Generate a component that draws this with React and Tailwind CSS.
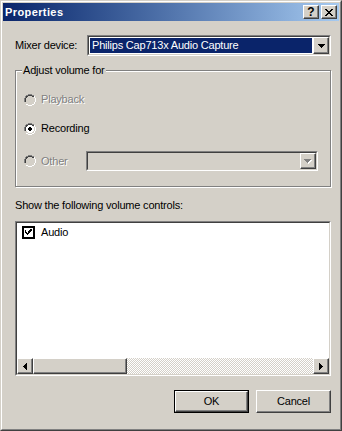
import React from "react";

const raised =
  "border border-t-[#ffffff] border-l-[#ffffff] border-r-[#404040] border-b-[#404040] shadow-[inset_-1px_-1px_0_#808080]";

function Arrow({ dir = "down", color = "#000" }) {
  if (dir === "down")
    return (
      <svg width="7" height="4" viewBox="0 0 7 4">
        <path d="M0 0h7v1H0zM1 1h5v1H1zM2 2h3v1H2zM3 3h1v1H3z" fill={color} />
      </svg>
    );
  if (dir === "left")
    return (
      <svg width="4" height="7" viewBox="0 0 4 7">
        <path d="M3 0h1v7H3zM2 1h1v5H2zM1 2h1v3H1zM0 3h1v1H0z" fill={color} />
      </svg>
    );
  return (
    <svg width="4" height="7" viewBox="0 0 4 7">
      <path d="M0 0h1v7H0zM1 1h1v5H1zM2 2h1v3H2zM3 3h1v1H3z" fill={color} />
    </svg>
  );
}

function Radio({ checked, disabled }) {
  return (
    <svg width="12" height="12" viewBox="0 0 12 12" className="shrink-0">
      <path d="M4 0h4v1H4zM2 1h2v1H2zM8 1h2v1H8zM1 2h1v2H1zM0 4h1v4H0z" fill="#808080" />
      <path d="M4 1h4v1H4zM2 2h2v1H2zM8 2h2v1H8zM2 3h1v1H2zM1 4h1v4H1z" fill="#404040" />
      <path d="M10 2h1v2h-1zM11 4h1v4h-1zM10 8h1v2h-1zM8 10h2v1H8zM4 11h4v1H4zM2 10h2v1H2z" fill="#ffffff" />
      <path d="M9 3h1v1H9zM10 4h1v4h-1zM9 8h1v1H9zM8 9h1v1H8zM4 10h4v1H4zM3 9h1v1H3zM2 8h1v1H2z" fill="#d4d0c8" />
      <path
        d="M4 2h4v1H4zM3 3h6v1H3zM2 4h8v4H2zM3 8h6v1H3zM4 9h4v1H4z"
        fill={disabled ? "#d4d0c8" : "#ffffff"}
      />
      {checked && <path d="M5 4h2v1H5zM4 5h4v2H4zM5 7h2v1H5z" fill="#000" />}
    </svg>
  );
}

function Check() {
  return (
    <svg width="13" height="13" viewBox="0 0 13 13" className="shrink-0">
      <rect x="0" y="0" width="13" height="13" fill="#000" />
      <rect x="2" y="2" width="9" height="9" fill="#fff" />
      <path d="M9 3h1v1H9zM8 4h2v1H8zM3 5h1v1H3zM7 5h2v1H7zM3 6h2v1H3zM6 6h2v1H6zM4 7h3v1H4zM5 8h1v1H5z" fill="#000" />
      <path d="M3 4h1v1H3zM4 6h1v1H4zM5 7h1v1H5zM6 5h1v1H6zM7 4h1v1H7zM8 3h1v1H8z" fill="#000" />
    </svg>
  );
}

function DisabledText({ children }) {
  return (
    <span className="text-[#808080] [text-shadow:1px_1px_0_#ffffff]">{children}</span>
  );
}

export default function App() {
  return (
    <div
      className="w-[342px] h-[431px] bg-[#d4d0c8] border border-t-[#d4d0c8] border-l-[#d4d0c8] border-r-[#404040] border-b-[#404040] text-[11px] text-black leading-[13px] tracking-[-0.2px]"
      style={{ fontFamily: '"Liberation Sans", Arial, sans-serif' }}
    >
      <div className="w-full h-full border border-t-white border-l-white border-r-[#808080] border-b-[#808080] p-px flex flex-col">
        {/* Title bar */}
        <div className="h-[18px] flex items-center justify-between bg-gradient-to-r from-[#0a246a] to-[#a6caf0] pl-[2px] pr-[2px]">
          <span className="text-white font-bold text-[11px] tracking-[0.4px]">Properties</span>
          <div className="flex gap-[2px]">
            <div className={`w-[16px] h-[14px] bg-[#d4d0c8] flex items-center justify-center ${raised}`}>
              <span className="font-bold text-[12px] leading-[11px] text-black tracking-normal">?</span>
            </div>
            <div className={`w-[16px] h-[14px] bg-[#d4d0c8] flex items-center justify-center ${raised}`}>
              <svg width="8" height="7" viewBox="0 0 8 7">
                <path d="M0 0h2v1H0zM6 0h2v1H6zM1 1h2v1H1zM5 1h2v1H5zM2 2h4v1H2zM3 3h2v1H3zM2 4h4v1H2zM1 5h2v1H1zM5 5h2v1H5zM0 6h2v1H0zM6 6h2v1H6z" fill="#000" />
              </svg>
            </div>
          </div>
        </div>

        {/* Content */}
        <div className="flex flex-col pl-[12px] pt-[14px]">
          {/* Mixer device */}
          <div className="flex items-center w-[316px] h-[21px]">
            <span className="w-[72px]">Mixer device:</span>
            <div className="flex-1 h-[21px] border border-t-[#808080] border-l-[#808080] border-r-white border-b-white">
              <div className="h-full border border-t-[#404040] border-l-[#404040] border-r-[#d4d0c8] border-b-[#d4d0c8] bg-white flex items-center p-px">
                <div className="flex-1 h-full bg-[#0a246a] text-white flex items-center pl-[2px]">
                  Philips Cap713x Audio Capture
                </div>
                <div className={`w-[16px] h-[17px] ml-[1px] -mr-px bg-[#d4d0c8] flex items-center justify-center ${raised}`}>
                  <Arrow />
                </div>
              </div>
            </div>
          </div>

          {/* Group box */}
          <div className="relative mt-[14px] w-[316px] h-[117px] border border-[#808080] shadow-[inset_1px_1px_0_#ffffff,1px_1px_0_#ffffff]">
            <span className="absolute left-[6px] -top-[7px] bg-[#d4d0c8] px-px">Adjust volume for</span>
            <div className="flex flex-col pl-[8px] pt-[22px]">
              <div className="flex items-center h-[13px] gap-[5px]">
                <Radio disabled />
                <DisabledText>Playback</DisabledText>
              </div>
              <div className="flex items-center h-[13px] gap-[5px] mt-[16px]">
                <Radio checked />
                <span>Recording</span>
              </div>
              <div className="flex items-center h-[20px] mt-[16px]">
                <div className="flex items-center gap-[5px] w-[62px]">
                  <Radio disabled />
                  <DisabledText>Other</DisabledText>
                </div>
                <div className="w-[232px] h-[20px] border border-t-[#808080] border-l-[#808080] border-r-white border-b-white">
                  <div className="h-full border border-t-[#404040] border-l-[#404040] border-r-[#d4d0c8] border-b-[#d4d0c8] bg-[#d4d0c8] flex justify-end">
                    <div className={`w-[16px] h-[16px] bg-[#d4d0c8] flex items-center justify-center ${raised}`}>
                      <svg width="8" height="5" viewBox="0 0 8 5">
                        <path d="M1 1h7v1H1zM2 2h5v1H2zM3 3h3v1H3zM4 4h1v1H4z" fill="#fff" />
                        <path d="M0 0h7v1H0zM1 1h5v1H1zM2 2h3v1H2zM3 3h1v1H3z" fill="#808080" />
                      </svg>
                    </div>
                  </div>
                </div>
              </div>
            </div>
          </div>

          <div className="mt-[12px] h-[13px]">Show the following volume controls:</div>

          {/* List */}
          <div className="mt-[9px] w-[316px] h-[155px] border border-t-[#808080] border-l-[#808080] border-r-white border-b-white">
            <div className="h-full border border-t-[#404040] border-l-[#404040] border-r-[#d4d0c8] border-b-[#d4d0c8] bg-white flex flex-col">
              <div className="flex-1">
                <div className="flex items-center gap-[6px] pl-[5px] pt-[2px] h-[17px]">
                  <Check />
                  <span>Audio</span>
                </div>
              </div>
              <div className="h-[16px] flex">
                <div className={`w-[16px] h-[16px] bg-[#d4d0c8] flex items-center justify-center ${raised}`}>
                  <Arrow dir="left" />
                </div>
                <div className={`w-[94px] h-[16px] bg-[#d4d0c8] ${raised}`} />
                <div className="flex-1 bg-[repeating-conic-gradient(#ffffff_0_25%,#d4d0c8_0_50%)] bg-[length:2px_2px]" />
                <div className={`w-[16px] h-[16px] bg-[#d4d0c8] flex items-center justify-center ${raised}`}>
                  <Arrow dir="right" />
                </div>
              </div>
            </div>
          </div>

          {/* Buttons */}
          <div className="flex w-[316px] justify-end gap-[7px] mt-[14px]">
            <div className="w-[75px] h-[23px] border border-black">
              <div className={`w-full h-full bg-[#d4d0c8] flex items-center justify-center ${raised}`}>OK</div>
            </div>
            <div className={`w-[75px] h-[23px] bg-[#d4d0c8] flex items-center justify-center ${raised}`}>Cancel</div>
          </div>
        </div>
      </div>
    </div>
  );
}
